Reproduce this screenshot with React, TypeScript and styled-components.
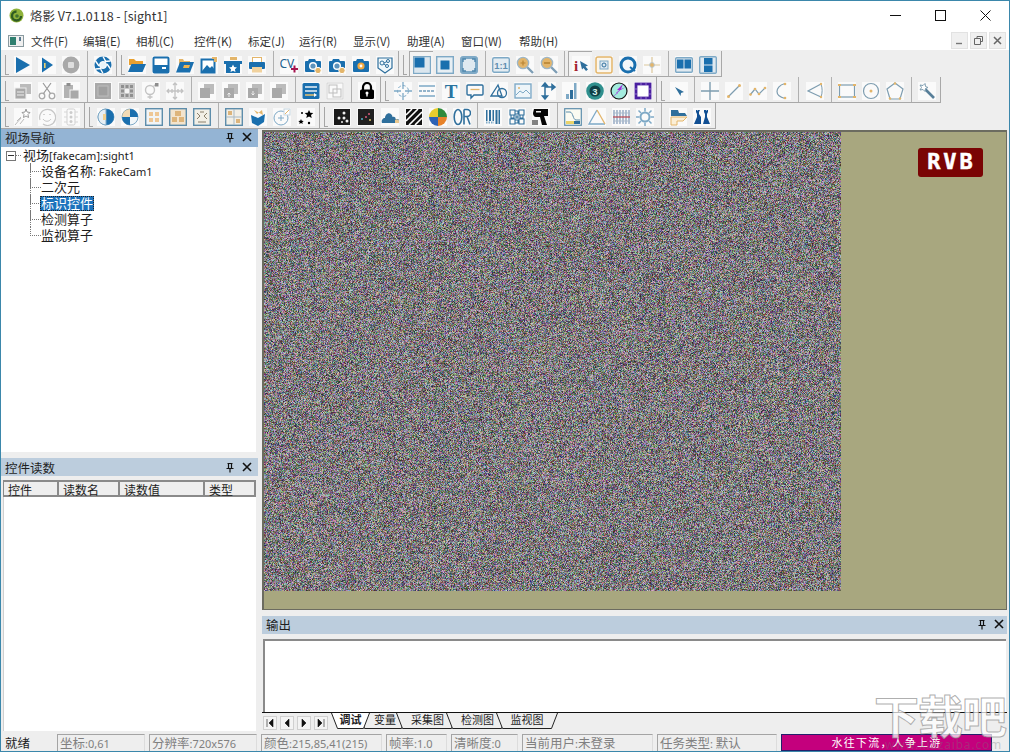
import React, { useEffect, useRef } from "react";
import styled, { createGlobalStyle } from "styled-components";

const B = "#1a6fae";
const L = "#7ea9c6";
const T = "#e3b56a";
const G = "#a9a9a9";
const D = "#2f6f9c";

const Global = createGlobalStyle`
  html, body { margin: 0; padding: 0; background: #eeeeee; }
  body { font-family: "Noto Sans CJK SC", "Noto Sans", sans-serif; color: #1c1c1c; }
  * { box-sizing: border-box; }
`;

const Win = styled.div`
  position: relative; width: 1010px; height: 752px; display: flex; flex-direction: column;
  border: 1px solid #3b87ab; background: #eeeeee; overflow: hidden;
`;
const TitleBar = styled.div`
  height: 30px; background: #fff; display: flex; align-items: center; padding: 0 1px 2px 8px; flex: none;
`;
const TitleText = styled.span`
  margin-left: 6px; font-size: 12.5px; color: #333; flex: 1;
`;
const WinBtn = styled.div`
  width: 45px; height: 28px; display: flex; align-items: center; justify-content: center;
`;
const MenuBar = styled.div`
  height: 19px; background: #fff; display: flex; align-items: center; padding-left: 7px; flex: none;
`;
const MenuItem = styled.span<{ $w: number }>`
  width: ${(p) => p.$w}px; font-size: 11.5px; color: #333; flex: none; white-space: nowrap;
`;
const MdiBtns = styled.div`
  margin-left: auto; display: flex; gap: 2px; padding-right: 3px;
`;
const MdiBtn = styled.div`
  width: 17px; height: 17px; background: #f0f0f0; border: 1px solid #e2e2e2; display: flex; align-items: center; justify-content: center;
`;
const Bands = styled.div`
  height: 79px; flex: none; display: flex; flex-direction: column; padding-top: 1px; background: #eeeeee;
`;
const Row = styled.div`
  height: 26px; display: flex; flex: none;
`;
const Toolbar = styled.div`
  display: flex; align-items: center; height: 26px; padding-right: 1px; border-right: 1px solid #a8a8a8; border-bottom: 1px solid #a8a8a8; flex: none; background: #eeeeee;
`;
const Grip = styled.div<{ $w: number }>`
  width: ${(p) => p.$w}px; height: 25px; padding: 4px 0 2px 4px; flex: none;
  &::before { content: ""; display: block; width: 3px; height: 100%; border-left: 1px solid #a5a5a5; border-bottom: 1px solid #a5a5a5; }
`;
const Sep = styled.div<{ $w: number }>`
  width: ${(p) => p.$w}px; height: 25px; flex: none; display: flex; justify-content: center;
  &::before { content: ""; width: 1px; height: 100%; background: #b0b0b0; }
`;
const Btn = styled.div<{ $on?: boolean }>`
  width: 24px; height: 25px; flex: none; display: flex; align-items: center; justify-content: center; padding-top: 2px;
  ${(p) => (p.$on ? "border-top: 1px solid #a8a8a8; border-left: 1px solid #a8a8a8; background: #f3f3f3;" : "")}
`;
const Cell = styled.div`
  width: 18px; height: 18px; background: #fafafa; display: flex;
  svg { display: block; }
`;
const Main = styled.div`
  flex: 1; display: flex; min-height: 0;
`;
const LeftDock = styled.div`
  width: 257px; flex: none; display: flex; flex-direction: column; margin-right: 4px;
`;
const DockHeader = styled.div<{ $active?: boolean; $pad: number; $low?: boolean }>`
  height: 18px; flex: none; display: flex; align-items: center; padding: 0 ${(p) => p.$pad}px ${(p) => (p.$low ? 0 : 2)}px 4px;
  background: ${(p) => (p.$active ? "#94b4d4" : "#bccddd")}; font-size: 12.5px; color: #1f1f1f;
  span { flex: 1; }
`;
const HeadIcons = styled.div`
  display: flex; gap: 7px; align-items: center;
`;
const TreePane = styled.div`
  height: 305px; flex: none; background: #fff; padding: 0 0 0 5px; margin-right: 2px; font-size: 13px; line-height: 16px;
`;
const TreeRoot = styled.div`
  display: flex; align-items: center; height: 17px;
`;
const Expander = styled.div`
  width: 10px; height: 10px; border: 1px solid #777; display: flex; align-items: center; justify-content: center; flex: none;
  &::before { content: ""; width: 6px; height: 1px; background: #333; }
`;
const Dash = styled.div`
  width: 5px; border-top: 1px dotted #777; margin: 0 1px 0 0; flex: none;
`;
const TreeKids = styled.div`
  padding-left: 24px; margin-top: -1px;
`;
const TreeRow = styled.div`
  display: flex; align-items: center; height: 16px; white-space: nowrap;
`;
const Connector = styled.div<{ $last?: boolean }>`
  width: 10px; height: 16px; flex: none; display: flex; flex-direction: column;
  border-left: 1px dotted ${(p) => (p.$last ? "transparent" : "#777")};
  &::before { content: ""; display: block; height: 8px; width: 10px; margin-left: -1px; border-left: 1px dotted #777; border-bottom: 1px dotted #777; }
`;
const TreeLabel = styled.span<{ $sel?: boolean }>`
  height: 15px; line-height: 14px; padding: 0 1px; flex: none;
  ${(p) => (p.$sel ? "background: #1c73bd; color: #fff; outline: 1px dotted #222; outline-offset: -1px;" : "")}
`;
const Latin = styled.span`
  font-family: "Noto Sans", sans-serif; font-size: 11px;
`;
const TablePanel = styled.div`
  flex: 1; display: flex; flex-direction: column; margin-top: 6px; min-height: 0;
`;
const TableWrap = styled.div`
  flex: 1; margin: 4px 2px 0 2px; background: #fff; border-left: 1px solid #d0d0d0;
`;
const ColHeads = styled.div`
  display: flex; height: 17px; margin-left: -1px; background: #eee; border-top: 2px solid #8a8a8a; border-bottom: 2px solid #8a8a8a; border-left: 1px solid #8a8a8a; border-right: 2px solid #8a8a8a; width: 253px;
`;
const ColHead = styled.div<{ $w: number }>`
  width: ${(p) => p.$w}px; flex: none; border-right: 2px solid #8a8a8a; font-size: 12px; line-height: 15px; height: 13px; padding-left: 4px; white-space: nowrap; overflow: visible;
  &:last-child { border-right: none; }
`;
const RightCol = styled.div`
  flex: 1; display: flex; flex-direction: column; min-width: 0; padding-right: 2px;
`;
const View = styled.div`
  position: relative; height: 480px; flex: none; margin-top: 1px; background: #a8a77f; border: 2px solid #6c6c60; border-bottom-width: 1px; border-right-width: 1px;
`;
const Noise = styled.canvas`
  display: block; width: 577px; height: 459px; filter: blur(0.55px);
`;
const Badge = styled.div`
  position: absolute; left: 654px; top: 16px; width: 65px; height: 29px; border-radius: 3px; background: #7a0404;
  color: #fff; font-family: "DejaVu Sans Mono", monospace; font-weight: 700; font-size: 22px; line-height: 28px; text-align: center; letter-spacing: 3px; -webkit-text-stroke: 0.5px #fff; padding-left: 2px;
`;
const OutPanel = styled.div`
  flex: 1; display: flex; flex-direction: column; margin-top: 6px;
`;
const OutBox = styled.div`
  height: 73px; flex: none; margin: 5px 1px 0 1px; background: #fff; border-top: 2px solid #8a8a8a; border-left: 2px solid #8a8a8a;
`;
const TabStrip = styled.div`
  flex: 1; border-top: 1px solid #111; display: flex; align-items: flex-start; padding-left: 1px;
`;
const NavBtn = styled.div`
  width: 14px; height: 14px; margin: 3px 3px 0 0; border: 1px solid #d0d0d0; background: #f4f4f4; display: flex; align-items: center; justify-content: center; flex: none;
`;
const Tabs = styled.div`
  display: flex;
`;
const Tab = styled.div<{ $w: number; $active?: boolean; $shift?: number }>`
  position: relative; width: ${(p) => p.$w}px; height: 17px; margin-left: -12px; flex: none; text-align: center; padding-left: ${(p) => p.$shift ?? 0}px;
  font-size: 11px; line-height: 13px; color: #222; font-weight: ${(p) => (p.$active ? 700 : 400)}; z-index: ${(p) => (p.$active ? 2 : 1)};
  &:first-child { margin-left: 0; }
  svg { position: absolute; left: 0; top: 0; z-index: -1; }
`;
const Status = styled.div`
  height: 20px; flex: none; display: flex; align-items: flex-end; padding-left: 4px; background: #eee;
`;
const Ready = styled.div`
  width: 52px; height: 17px; font-size: 12.5px; line-height: 18px; flex: none;
`;
const Pane = styled.div<{ $w: number }>`
  width: ${(p) => p.$w}px; height: 17px; flex: none; margin-right: 4px; border: 1px solid #a4a4a4; border-bottom: none; border-right-color: #dcdcdc;
  color: #808080; font-size: 12.5px; line-height: 15px; padding-left: 2px; white-space: nowrap; overflow: hidden;
`;
const Slogan = styled.div`
  width: 211px; height: 17px; flex: none; background: #c4007d; color: #fff; border: 1px solid #24206a; font-size: 11px; letter-spacing: 1.2px; line-height: 15px; text-align: center;
`;
const Watermark = styled.div`
  position: absolute; left: 873px; top: 688px; pointer-events: none; font-size: 45px; line-height: 52px; font-weight: 700; letter-spacing: -1px; white-space: nowrap;
  color: rgba(255,255,255,0.72); -webkit-text-stroke: 1px rgba(140,140,140,0.7);
`;
const WatermarkUrl = styled.div`
  position: absolute; left: 884px; top: 735px; pointer-events: none; font-family: "Noto Sans", sans-serif; font-size: 12px; letter-spacing: 0.8px; color: rgba(120,120,120,0.35);
`;

const S = (c: React.ReactNode) => (
  <svg width="18" height="18" viewBox="0 0 18 18" fill="none">{c}</svg>
);
const overlapGray = (extra?: React.ReactNode) => (
  <>
    <rect x="6" y="2" width="10" height="10" fill="#bbb" />
    <rect x="2" y="6" width="10" height="10" fill={G} />
    {extra}
  </>
);
const zoom = (sign: React.ReactNode) => (
  <>
    <path d="M11 11l6 6" stroke="#7d9db5" strokeWidth="2.4" />
    <circle cx="7" cy="7" r="5.6" fill={T} stroke="#9fb6c6" strokeWidth="1.4" />
    {sign}
  </>
);
const camera = (inner: string, badge?: boolean) => (
  <>
    <path d="M5 3h6l1 2h4a1 1 0 011 1v9a1 1 0 01-1 1H2a1 1 0 01-1-1V6a1 1 0 011-1h2z" fill={B} />
    <circle cx="9" cy="10" r="4" fill="#fff" />
    <circle cx="9" cy="10" r="2.6" fill={inner} />
    {badge && <circle cx="14" cy="14.5" r="3.2" fill={T} stroke="#fff" />}
  </>
);
const icons: Record<string, React.ReactNode> = {
  play: <path d="M2 1l14 8-14 8z" fill={B} />,
  step: (<><path d="M4 1.5l11 7.5-11 7.5z" fill={B} /><rect x="6" y="7" width="1.6" height="5" fill="#e8d070" /></>),
  stop: (<><circle cx="9" cy="9" r="8.4" fill={G} /><rect x="6" y="6" width="6" height="6" rx="1" fill="#dedede" /></>),
  aperture: (<><circle cx="9" cy="9" r="8.5" fill={B} /><path d="M9 .5L12 6M16.5 5L10.5 5.5M16.5 13l-3.500-5M9 17.500L6 12M1.500 13l6-.5M1.500 5l3.500 5" stroke="#fff" strokeWidth="1.4" /><circle cx="9" cy="9" r="3.500" fill="#e9f2f8" stroke="#fff" /></>),
  open: (<><path d="M1 3h5l2 2h7v4H1z" fill="#e8a030" /><path d="M3.500 8H18l-3.500 8H0z" fill={B} /></>),
  save: (<><rect x="1.500" y="1.500" width="15" height="15" rx="1" stroke={B} strokeWidth="2" fill="#fff" /><rect x="1.500" y="9" width="15" height="8" fill={B} /><rect x="10" y="11" width="4" height="2" fill="#fff" /></>),
  openImg: (<><path d="M3 3h4l1 2h6v4H3z" fill={T} /><path d="M4 6h14l-4 10.500H0z" fill={B} /><path d="M8 9h6l-1 3H7z" fill="#eeb450" /></>),
  saveImg: (<><rect x="1.500" y="3.500" width="13" height="13" stroke={B} strokeWidth="2" fill="#fff" /><path d="M2 15l5-6 3 3 2-2 3 4v2H2z" fill={B} /><path d="M12 1h5v5h-3V3h-2z" fill={T} /></>),
  starBox: (<><path d="M6 1h7v3H6z" fill={T} /><path d="M0 5h18v3H0z" fill={B} /><path d="M2 8h14v9H2z" fill={B} /><path d="M9 8.500l1.200 2.600 2.800.3-2.100 1.900.6 2.700L9 14.700l-2.500 1.300.6-2.700L5 11.400l2.800-.3z" fill="#fff" /></>),
  print: (<><rect x="4.500" y="1.500" width="9" height="5" stroke={T} fill="#fff" /><rect x="1" y="6" width="16" height="7" rx="1" fill={B} /><rect x="4" y="11" width="10" height="5.500" fill="#f1d29e" /></>),
  cv: (<><text x="-0.500" y="12" fontSize="12" fontFamily="Noto Sans" fill="#22628f">CV</text><path d="M11 13h7M14.500 9.500v7" stroke="#a5154f" strokeWidth="2" /></>),
  camAdd: camera("#5d93bc", true),
  camAdd2: camera("#5d93bc", true),
  camOrange: (<><path d="M5 3h6l1 2h4a1 1 0 011 1v9a1 1 0 01-1 1H2a1 1 0 01-1-1V6a1 1 0 011-1h2z" fill={B} /><circle cx="9" cy="10" r="3.600" fill="#f3a93f" /><circle cx="9" cy="10" r="1.400" fill="#fff" /></>),
  share: (<><path d="M2 2h14v10l-7 5-7-5z" stroke={D} strokeWidth="1.2" fill="#f1f8fb" /><circle cx="6" cy="7" r="2" stroke={D} /><circle cx="12" cy="5" r="1.500" stroke={D} /><circle cx="11" cy="10" r="1.500" stroke={D} /><path d="M8 7l3-1.500M8 8l2 1.500" stroke={D} /></>),
  l1: (<><rect x=".5" y=".5" width="17" height="17" fill="#dbe6ee" stroke={L} strokeWidth="1.400" /><rect x="1.500" y="1.500" width="10" height="10" fill={B} /></>),
  l2: (<><rect x=".7" y=".7" width="16.600" height="16.600" fill="#e7eff4" stroke={L} strokeWidth="1.400" /><rect x="4.500" y="4.500" width="9" height="9" fill={B} /></>),
  l3: (<><rect x="0" y="0" width="18" height="18" rx="3" fill={L} /><rect x="3" y="3" width="12" height="12" fill="#dfe9f0" /><path d="M3 6V3h3M12 3h3v3M15 12v3h-3M6 15H3v-3" stroke="#4e86ad" strokeWidth="1.400" /></>),
  one: (<><rect x=".7" y="1.700" width="16.600" height="14.600" rx="1.500" fill="#e3ecf2" stroke={L} strokeWidth="1.400" /><text x="9" y="12.500" textAnchor="middle" fontSize="9.500" fontWeight="700" fontFamily="Liberation Sans" fill="#5f8fb0">1:1</text></>),
  zoomIn: zoom(<path d="M4.500 7h5M7 4.500v5" stroke="#b88434" strokeWidth="1.200" />),
  zoomOut: zoom(<path d="M4 7h6" stroke="#b88434" strokeWidth="1.600" />),
  iArrow: (<><text x="2" y="15" fontSize="15" fontWeight="700" fontFamily="Liberation Serif" fill="#a4232e">i</text><path d="M8 5l8 4.500-2.500 1 2.500 3-2 1.500-2.500-3L10 13.500z" fill={D} /></>),
  rectCam: (<><rect x="1" y="1" width="16" height="16" rx="2" fill="#fbf6ec" stroke={T} strokeWidth="1.500" /><rect x="5" y="5" width="8" height="8" stroke={L} fill="#dce8f0" /><circle cx="9" cy="9" r="2" stroke={D} /></>),
  q: (<><circle cx="9" cy="9" r="7" fill="#f2f7fa" stroke={B} strokeWidth="3" /><path d="M11 11l5 4" stroke={B} strokeWidth="2" /></>),
  cross: (<><path d="M9 1v16M1 9h16" stroke="#dcc79b" strokeWidth="1.200" /><circle cx="9" cy="9" r="2.400" fill={T} stroke="#b8c8d2" /></>),
  split1: (<><rect x=".7" y="1.700" width="16.600" height="14.600" rx="1" fill="#dfe9f0" stroke={L} strokeWidth="1.400" /><rect x="2" y="3.500" width="6.500" height="9" fill={B} /><rect x="9.500" y="3.500" width="6.500" height="9" fill={B} /></>),
  split2: (<><rect x=".7" y=".7" width="16.600" height="16.600" rx="1" fill="#dfe9f0" stroke={L} strokeWidth="1.400" /><rect x="5" y="2" width="8.500" height="6.500" fill={B} /><rect x="5" y="9.500" width="8.500" height="6.500" fill={B} /></>),
  copy: (<><rect x="6" y="2" width="11" height="10" fill="#bbb" /><rect x="1" y="6" width="11" height="11" fill={G} stroke="#eee" /><path d="M3 10h7M3 13h7" stroke="#eee" /></>),
  cut: (<><circle cx="4" cy="14" r="2.800" stroke={G} strokeWidth="1.300" /><circle cx="14" cy="14" r="2.800" stroke={G} strokeWidth="1.300" /><path d="M5.500 11.500L13 1M12.500 11.500L5 1" stroke="#999" strokeWidth="1.200" /></>),
  paste: (<><path d="M2 3h9v13H2z" fill="#b3b3b3" /><rect x="4.500" y="1" width="4" height="3" fill="#8e8e8e" /><rect x="8" y="8" width="9" height="9" fill={G} stroke="#f2f2f2" /></>),
  graySquare: (<><rect x="1" y="1" width="16" height="16" fill={G} /><rect x="4" y="4" width="10" height="10" fill="#a0a0a0" stroke="#bdbdbd" /></>),
  grayDots: (<><rect x="1" y="1" width="16" height="16" fill="#c8c8c8" /><path d="M3 3h3v3H3zM7.500 3h3v3h-3zM12 3h3v3h-3zM3 7.500h3v3H3zM12 7.500h3v3h-3zM3 12h3v3H3zM7.500 12h3v3h-3zM12 12h3v3h-3z" fill="#8f8f8f" /><rect x="7" y="7" width="4" height="4" fill="#f4f4f4" /></>),
  person: (<><circle cx="8" cy="8" r="4.500" stroke="#c4c4c4" strokeWidth="1.400" /><path d="M8 12.500V17M5.500 15h5M11.500 4.500l3-3" stroke="#c4c4c4" strokeWidth="1.300" /><rect x="13" y="1" width="3.500" height="3.500" fill="#8e8e8e" /></>),
  move: <path d="M9 1v16M1 9h16M7 3l2-2 2 2M7 15l2 2 2-2M3 7L1 9l2 2M15 7l2 2-2 2M6 7v4M12 7v4" stroke="#c2c2c2" strokeWidth="1.300" />,
  gs1: overlapGray(),
  gs2: overlapGray(<path d="M7 15v-4M5.500 12.500L7 11l1.500 1.500" stroke="#eee" />),
  gs3: overlapGray(<path d="M7 9v4M5.500 11.500L7 13l1.500-1.500" stroke="#eee" />),
  gs4: overlapGray(),
  listBlue: (<><rect x=".5" y="1" width="17" height="16" rx="1.500" fill={B} /><path d="M3 5h12M3 9h12" stroke="#eaf2f7" strokeWidth="1.500" /><path d="M3 13h9" stroke="#e7c16f" strokeWidth="1.500" /><path d="M12 11l3 2-3 2z" fill="#fff" /></>),
  grayCopy: (<><rect x="1" y="1" width="16" height="16" stroke="#d0d0d0" /><rect x="3" y="3" width="8" height="8" stroke="#bdbdbd" /><rect x="7" y="7" width="8" height="8" stroke="#bdbdbd" /></>),
  lock: (<><path d="M5 8V5a4 4 0 018 0v3" stroke="#000" strokeWidth="2.200" /><rect x="2" y="7.500" width="14" height="9.500" rx="1.500" fill="#000" /><circle cx="9" cy="11" r="1.500" fill="#fff" /><rect x="8.300" y="11" width="1.400" height="3.500" fill="#fff" /></>),
  crossDash: (<><circle cx="9" cy="9" r="5.500" stroke={L} strokeDasharray="3 2" /><path d="M9 0v7M9 11v7M0 9h7M11 9h7" stroke={L} strokeWidth="1.300" /></>),
  lines: (<><path d="M1 4h16M1 14h16" stroke={L} strokeWidth="1.600" /><path d="M1 9h16" stroke={D} strokeWidth="1.200" strokeDasharray="3 1" /></>),
  T: <text x="9" y="16" textAnchor="middle" fontSize="19" fontWeight="700" fontFamily="Liberation Serif" fill="#2b749f">T</text>,
  bubble: (<><path d="M2 3h14a1 1 0 011 1v8a1 1 0 01-1 1H8l-3 3v-3H2a1 1 0 01-1-1V4a1 1 0 011-1z" stroke={D} strokeWidth="1.400" /><path d="M4.500 7.500h9" stroke={T} strokeWidth="1.300" /></>),
  shapes: (<><path d="M8 3L1 14h11z" stroke={D} strokeWidth="1.300" /><circle cx="12" cy="11" r="4.500" stroke={D} strokeWidth="1.300" /></>),
  image: (<><rect x="1" y="2" width="16" height="14" stroke={L} strokeWidth="1.400" fill="#eef5f9" /><path d="M2 13l4-4 3 2 3-3 4 4" stroke={L} /><circle cx="5" cy="6" r="1" fill={T} /></>),
  axes: <path d="M7 1l-2.500 3h5zM7 17l-2.500-3h5zM17 5l-3-2.500v5zM7 3v12M7 5h8" stroke={D} fill={D} strokeWidth="1.500" />,
  bars: (<><rect x="4" y="12" width="3" height="5" fill={L} /><rect x="8" y="8" width="3" height="9" fill={D} /><rect x="12" y="1" width="2.500" height="16" fill={L} /></>),
  circle3: (<><circle cx="9" cy="9" r="8.800" fill="#2f8f8d" /><circle cx="9" cy="9" r="5.500" fill="#0f3f45" /><text x="9" y="12.500" textAnchor="middle" fontSize="9.500" fontWeight="700" fontFamily="Liberation Sans" fill="#d7f2ee">3</text></>),
  bolt: (<><circle cx="9" cy="9" r="8" fill="#a4ecde" stroke="#111" strokeWidth="1.200" /><path d="M13 2L7 8l3 .5L0 17l8-6-2-.5L16 5l-5 2z" fill="#a225d6" /></>),
  purpleSq: (<><rect x="2" y="2" width="14" height="14" stroke="#4a1fa0" strokeWidth="2.800" fill="#fff" /><path d="M2 6v2M2 11v2M16 6v2M16 11v2M6 2h2M11 2h2M6 16h2M11 16h2" stroke="#8f72c9" /></>),
  arrow: <path d="M5 5l9 5-3 1-.5 3z" fill={D} />,
  plus: (<><path d="M9 0v18M0 9h18" stroke="#7e9db0" strokeWidth="1.400" /></>),
  line: (<><path d="M3 15L15 3" stroke="#7e9db0" strokeWidth="1.200" /><circle cx="3.500" cy="14.500" r="1.500" fill={T} /><circle cx="14.500" cy="3.500" r="1.500" fill={T} /></>),
  poly: (<><path d="M1 13l5-6 4 5 6-6" stroke="#7e9db0" strokeWidth="1.200" /><circle cx="1.500" cy="12.500" r="1.300" fill={T} /><circle cx="6" cy="7" r="1.300" fill={T} /><circle cx="10" cy="12" r="1.300" fill={T} /><circle cx="16" cy="6" r="1.300" fill={T} /></>),
  arc: (<><path d="M12 1.500C6 3 4 7 4 9.500s2 5.500 8 7" stroke="#7e9db0" strokeWidth="1.200" /><circle cx="12" cy="2" r="1.300" fill={T} /><circle cx="12" cy="16" r="1.300" fill={T} /></>),
  angle: (<><path d="M15 2L2 9l13 6" stroke="#7e9db0" strokeWidth="1.200" /><path d="M15 2c1.500 4 1.500 9 0 13" stroke="#7e9db0" /><circle cx="15" cy="2" r="1.200" fill={T} /><circle cx="15" cy="15" r="1.200" fill={T} /></>),
  rect: (<><rect x="1.500" y="3" width="15" height="12" stroke="#7e9db0" strokeWidth="1.200" /><path d="M0 2h3v2H0zM15 2h3v2h-3zM0 14h3v2H0zM15 14h3v2h-3z" fill={T} /></>),
  circle: (<><circle cx="9" cy="9" r="7.500" stroke="#7e9db0" strokeWidth="1.200" /><circle cx="9" cy="9" r="1.500" fill={T} /></>),
  penta: (<><path d="M9 1l8 6-3 10H4L1 7z" stroke="#7e9db0" strokeWidth="1.200" /><circle cx="9" cy="1.500" r="1.200" fill={T} /><circle cx="4" cy="16.500" r="1.200" fill={T} /><circle cx="14" cy="16.500" r="1.200" fill={T} /></>),
  wand: (<><path d="M6 6l10 10" stroke="#587f99" strokeWidth="2.600" /><path d="M2 3l3 .5 2-2 .5 3 2.500 1-2.500 1-.5 3-2-2-3 .5 1.500-2.500z" stroke="#7e9db0" fill="#fff" /></>),
  meteor: (<><path d="M12 1l1 3 3 .5-2 2 .5 3-2.500-1.500L9.500 9.500l.5-3-2-2 3-.5z" stroke="#9a9a9a" fill="#fff" /><path d="M1 17l6-7M3 13l4-4M6 16l4-5" stroke="#bbb" /></>),
  smile: (<><path d="M2 12a8 8 0 1 1 3 4" stroke="#c6c6c6" strokeWidth="1.200" /><path d="M5 11c2 3 6 3 8 0" stroke="#c6c6c6" /><path d="M6 6v1M12 6v1" stroke="#c6c6c6" strokeWidth="1.500" /></>),
  traffic: (<><rect x="5" y="1" width="8" height="16" rx="1.500" stroke="#cfcfcf" /><circle cx="9" cy="4.500" r="1.500" fill="#ccc" /><circle cx="9" cy="9" r="1.500" fill="#ccc" /><circle cx="9" cy="13.500" r="1.500" fill="#ccc" /><path d="M2 4h3M2 9h3M2 14h3M13 4h3M13 9h3M13 14h3" stroke="#d6d6d6" /></>),
  half: (<><circle cx="9" cy="9" r="8" fill="#fff" stroke={L} /><path d="M9 1a8 8 0 010 16z" fill={B} /><path d="M9 1a8 8 0 000 16z" fill="#e7eff4" stroke={L} /><path d="M6 6h3v6H6z" fill="#f0d090" /></>),
  pie4: (<><circle cx="9" cy="9" r="8" fill="#f2f6f8" stroke={L} /><path d="M9 1a8 8 0 018 8H9zM9 9v8a8 8 0 01-8-8z" fill={B} /><path d="M9 9H1a8 8 0 018-8z" fill="#f2c98a" opacity=".6" /></>),
  g1: (<><rect x=".7" y=".7" width="16.600" height="16.600" fill="#f1f4f6" stroke="#5d8dab" strokeWidth="1.400" /><path d="M4 4h4v4H4zM10 4h4v4h-4zM4 10h4v4H4zM10 10h4v4h-4z" fill="#eec795" /></>),
  g2: (<><rect x=".7" y=".7" width="16.600" height="16.600" fill="#f3e4cd" stroke="#5d8dab" strokeWidth="1.400" /><path d="M6 3h6v5H6zM3 9h5v5H3zM10 9h5v5h-5z" fill="#deb57b" /></>),
  g3: (<><rect x=".7" y=".7" width="16.600" height="16.600" fill="#f2efe6" stroke="#5d8dab" strokeWidth="1.400" /><path d="M4 5l3 3-3 3M14 5l-3 3 3 3M5 14h8M7 4h4" stroke="#8a7f6a" /></>),
  g4: (<><rect x=".7" y=".7" width="16.600" height="16.600" fill="#f2efe6" stroke="#5d8dab" strokeWidth="1.400" /><path d="M9 1v16M1 9h16" stroke="#a9b9c4" /><path d="M3 3h4v4H3zM11 11h4v4h-4z" fill="#dcb47b" /></>),
  folderCheck: (<><path d="M5 2l3 4 5-4 1 5z" fill={T} /><path d="M2 7l7 3 7-4-1 8-6 4-6-3z" fill={B} /></>),
  circlePlus: (<><circle cx="8" cy="10" r="7" stroke={L} /><path d="M5 10h6M8 7v6" stroke={L} /><rect x="11" y="1" width="6" height="6" stroke="#c5d5df" fill="#fff" /><path d="M12 6l4-4" stroke={T} /></>),
  stars: (<><path d="M12 2l1.300 2.800 3 .3-2.300 2 .7 3-2.700-1.600L9.300 10l.7-3-2.300-2 3-.3z" fill="#000" /><circle cx="5" cy="5" r="1" fill="#000" /><path d="M4 11l.8 1.700 1.900.2-1.400 1.300.4 1.800-1.700-1-1.700 1 .4-1.800-1.400-1.300 1.900-.2z" fill="#000" /><circle cx="12" cy="15" r="1.200" fill="#000" /></>),
  dots1: (<><rect x="1" y="1" width="16" height="16" fill="#1b1b1b" /><circle cx="11" cy="5" r="1.500" fill="#eee" /><circle cx="6" cy="10" r="1.500" fill="#eee" /><circle cx="11" cy="10" r="1.500" fill="#eee" /><circle cx="14" cy="13" r="1.500" fill="#eee" /><circle cx="9" cy="14" r="1" fill="#eee" /></>),
  dots2: (<><rect x="1" y="1" width="16" height="16" fill="#202020" /><circle cx="12" cy="6" r="1" fill="#d85a7a" /><circle cx="5" cy="11" r="1" fill="#59b0c9" /><circle cx="9" cy="9" r="1" fill="#d85a7a" /><circle cx="13" cy="12" r="1" fill="#d8c06a" /></>),
  cloud: (<><path d="M1 15c-1-3 1-5 3-5 0-3 3-6 6-4 1 1 1.500 2 1.500 3 2-1 3.500 1 3 2h3v4z" fill={D} /><path d="M14 12c1-1 3-1 4 1v2h-4z" fill="#e9c88f" /></>),
  stripes: (<><rect x="1" y="1" width="16" height="16" fill="#111" /><path d="M1 7l6-6M1 13L13 1M4 17L17 4M10 17l7-7" stroke="#fff" strokeWidth="1.600" /></>),
  wheel: (<><path d="M9 9V0a9 9 0 019 9z" fill="#2f8a3c" /><path d="M9 9h9a9 9 0 01-9 9z" fill="#e7822a" /><path d="M9 9v9a9 9 0 01-9-9z" fill="#2d62b5" /><path d="M9 9H0a9 9 0 019-9z" fill="#e8cc2d" /></>),
  ocr: (<><ellipse cx="5" cy="9" rx="3.800" ry="7.500" stroke={D} strokeWidth="1.600" /><path d="M11 1.500v15M11 1.500h3a3.500 3.500 0 010 7h-3M14 8.500l3 8" stroke={D} strokeWidth="1.600" /></>),
  barcode: (<><path d="M2 2h1.500v11H2zM5 2h2v11H5zM8.500 2H10v11H8.500zM11.500 2h2v14h-2zM14.500 2H16v14h-1.500z" fill={D} /><path d="M2 14.500h8" stroke={L} strokeWidth="2" strokeDasharray="1.500 1" /></>),
  qr: <path d="M2 2h5v5H2zM11 2h5v5h-5zM2 11h5v5H2zM8 8h2v2H8zM11 11h5v5h-5zM7 3h3v3H7zM3 7h3v3H3zM12 7h3v3h-3zM7 12h3v3H7z" fill="none" stroke={D} strokeWidth="1.100" />,
  scanner: (<><path d="M2 1h14v7h-4l3 9h-5l-2-8H4C2 9 1 7 1 5z" fill="#050505" /><rect x="4" y="3" width="5" height="1.500" fill="#eee" /><path d="M1 12v5M3 12v5M5 12v5" stroke="#333" strokeWidth="1.200" /></>),
  curve: (<><rect x=".7" y=".7" width="16.600" height="16.600" fill="#fbfbf2" stroke="#5d8dab" strokeWidth="1.200" /><path d="M2 4h4c3 0 3 8 6 8h4" stroke="#5d8dab" /><rect x="2" y="13" width="8" height="3" fill="#ead36a" /><rect x="10" y="13" width="6" height="3" fill={D} /></>),
  triangle: (<><path d="M9 2L1 16h16" stroke={L} strokeWidth="1.300" /><path d="M9 2l8 14" stroke={T} strokeWidth="1.300" /></>),
  gridH: (<><path d="M2 2v14M5 2v14M8 2v14M11 2v14M14 2v14M17 2v14" stroke="#8aa0bd" strokeWidth="1.300" /><path d="M1 5h17M1 13h17" stroke="#a9bacb" /><path d="M1 9h17" stroke="#b8505a" strokeWidth="1.300" /></>),
  sun: (<><circle cx="9" cy="9" r="4.500" stroke={L} strokeWidth="2" /><path d="M9 0v3.500M9 14.500V18M0 9h3.500M14.500 9H18M2.500 2.500L5 5M13 13l2.500 2.500M15.500 2.500L13 5M5 13l-2.500 2.500" stroke={L} strokeWidth="1.500" /></>),
  tray: (<><path d="M2 2h7l1 3h6l2 3H2z" fill={D} /><path d="M2 9h16l-4 4H8v4H2z" fill="#fbefd7" stroke={T} /></>),
  flasks: (<><path d="M3 2v2l1 2v3L1 16h7V9L6 6V4l1-2H5l-.5 1L4 2zM11 2v2l1 2v3l-2 7h7l-3-7V6l1-2V2h-1l-.5 1-.5-1z" fill="#114f93" /></>),
};

type Item = string | number;
type Bar = { grip: number; items: Item[] };
const rows: Bar[][] = [
  [
    { grip: 10, items: ["play", "step", "stop", 8, "aperture"] },
    { grip: 8, items: ["open", "save", "openImg", "saveImg", "starBox", "print", 8, "cv", "camAdd", "camAdd2", "camOrange", "share"] },
    { grip: 10, items: ["l1", "l2", "l3", 8, "one", "zoomIn", "zoomOut", 7, "iArrow", "rectCam", "q", "cross", 8, "split1", "split2"] },
  ],
  [
    { grip: 10, items: ["copy", "cut", "paste", 8, "graySquare", "grayDots", "person", "move", 8, "gs1", "gs2", "gs3", "gs4", 8, "listBlue", "grayCopy", 8, "lock"] },
    { grip: 10, items: ["crossDash", "lines", "T", "bubble", "shapes", "image", "axes", "bars", "circle3", "bolt", "purpleSq"] },
    { grip: 10, items: ["arrow", 7, "plus", "line", "poly", "arc", 9, "angle", 8, "rect", "circle", "penta", 8, "wand"] },
  ],
  [
    { grip: 10, items: ["meteor", "smile", "traffic"] },
    { grip: 9, items: ["half", "pie4", "g1", "g2", "g3", 8, "g4", "folderCheck", "circlePlus", "stars"] },
    { grip: 10, items: ["dots1", "dots2", "cloud", "stripes", "wheel", "ocr", 7, "barcode", "qr", "scanner", 8, "curve", "triangle", "gridH", "sun", 9, "tray", "flasks"] },
  ],
];
const activeIcons = new Set(["l1", "iArrow"]);

const menus: [string, number][] = [
  ["文件(F)", 52], ["编辑(E)", 53], ["相机(C)", 58], ["控件(K)", 54], ["标定(J)", 51],
  ["运行(R)", 54], ["显示(V)", 54], ["助理(A)", 54], ["窗口(W)", 58], ["帮助(H)", 60],
];

const Pin = () => (
  <svg width="10" height="11" viewBox="0 0 10 11" fill="none"><path d="M2.500 1.500h5M3.500 1.500v5M6.500 1.500v5M1.500 6.500h7M5 6.500V10.500" stroke="#111" strokeWidth="1.200" /></svg>
);
const CloseX = () => (
  <svg width="10" height="10" viewBox="0 0 10 10"><path d="M1 1l8 8M9 1L1 9" stroke="#111" strokeWidth="1.600" /></svg>
);
const HeaderTools = () => (
  <HeadIcons><Pin /><CloseX /></HeadIcons>
);

const TabShape = ({ w, active }: { w: number; active?: boolean }) => (
  <svg width={w} height="17" viewBox={`0 0 ${w} 17`}>
    <path d={`M0.500 0L6.500 15.500H${w - 6.5}L${w - 0.5} 0`} fill={active ? "#fff" : "#eeeeee"} stroke="#222" />
  </svg>
);

const NoiseCanvas = () => {
  const ref = useRef<HTMLCanvasElement>(null);
  useEffect(() => {
    const c = ref.current;
    const ctx = c?.getContext("2d");
    if (!c || !ctx) return;
    const img = ctx.createImageData(c.width, c.height);
    let s = 12345;
    const rnd = () => {
      s = (s * 1664525 + 1013904223) >>> 0;
      return (s >>> 16) / 65536;
    };
    for (let i = 0; i < img.data.length; i += 4) {
      const g = 70 + rnd() * 110;
      img.data[i] = g + (rnd() - 0.5) * 90;
      img.data[i + 1] = g - 4 + (rnd() - 0.5) * 80;
      img.data[i + 2] = g + (rnd() - 0.5) * 90;
      img.data[i + 3] = 255;
    }
    ctx.putImageData(img, 0, 0);
  }, []);
  return <Noise ref={ref} width={577} height={459} />;
};

const Nav = ({ d }: { d: string }) => (
  <NavBtn><svg width="8" height="8" viewBox="0 0 8 8"><path d={d} fill="#111" stroke="#111" strokeWidth=".6" /></svg></NavBtn>
);

const tabs = [
  { t: "调试", w: 39, active: true, shift: 0 },
  { t: "变量", w: 50, shift: 4 },
  { t: "采集图", w: 62, shift: 1 },
  { t: "检测图", w: 62, shift: 1 },
  { t: "监视图", w: 62, shift: 0 },
];

export default function App() {
  return (
    <Win>
      <Global />
      <TitleBar>
        <svg width="15" height="15" viewBox="0 0 15 15">
          <circle cx="7.500" cy="7.500" r="7" fill="#8fb23a" />
          <path d="M12 8a4.500 4.500 0 11-4.500-4.500" fill="none" stroke="#2f5c22" strokeWidth="2.400" />
          <circle cx="8" cy="8" r="1.800" fill="#3f7030" />
        </svg>
        <TitleText>烙影 V7.1.0118 - [sight1]</TitleText>
        <WinBtn><svg width="11" height="11"><path d="M0 5.500h11" stroke="#111" /></svg></WinBtn>
        <WinBtn><svg width="11" height="11"><rect x=".5" y=".5" width="10" height="10" fill="none" stroke="#111" /></svg></WinBtn>
        <WinBtn><svg width="11" height="11"><path d="M.5 .5l10 10M10.500 .5l-10 10" stroke="#111" /></svg></WinBtn>
      </TitleBar>
      <MenuBar>
        <svg width="16" height="12" viewBox="0 0 16 12" style={{ marginRight: 7, flex: "none" }}>
          <rect x=".5" y=".5" width="15" height="11" fill="#f0f0f0" stroke="#8a9aa0" />
          <rect x="2" y="2" width="6" height="8" fill="#2f7f6f" />
          <rect x="11" y="2" width="2" height="4" fill="#5a7a90" />
        </svg>
        {menus.map(([m, w]) => (
          <MenuItem key={m} $w={w}>{m}</MenuItem>
        ))}
        <MdiBtns>
          <MdiBtn><svg width="9" height="9"><path d="M1 7.500h6" stroke="#777" strokeWidth="1.400" /></svg></MdiBtn>
          <MdiBtn><svg width="9" height="9" fill="none"><path d="M3 2.500V.5h5.500v5H6.500M.5 2.500h6v6h-6z" stroke="#666" /></svg></MdiBtn>
          <MdiBtn><svg width="9" height="9"><path d="M1 1l7 7M8 1L1 8" stroke="#666" strokeWidth="1.500" /></svg></MdiBtn>
        </MdiBtns>
      </MenuBar>
      <Bands>
        {rows.map((bars, r) => (
          <Row key={r}>
            {bars.map((bar, b) => (
              <Toolbar key={b}>
                <Grip $w={bar.grip} />
                {bar.items.map((it, i) =>
                  typeof it === "number" ? (
                    <Sep key={i} $w={it} />
                  ) : (
                    <Btn key={i} $on={activeIcons.has(it)}>
                      <Cell>{S(icons[it])}</Cell>
                    </Btn>
                  )
                )}
              </Toolbar>
            ))}
          </Row>
        ))}
      </Bands>
      <Main>
        <LeftDock>
          <DockHeader $active $pad={6}>
            <span>视场导航</span>
            <HeaderTools />
          </DockHeader>
          <TreePane>
            <TreeRoot>
              <Expander />
              <Dash />
              <TreeLabel>视场<Latin>[fakecam]:sight1</Latin></TreeLabel>
            </TreeRoot>
            <TreeKids>
              <TreeRow><Connector /><TreeLabel>设备名称<Latin>: FakeCam1</Latin></TreeLabel></TreeRow>
              <TreeRow><Connector /><TreeLabel>二次元</TreeLabel></TreeRow>
              <TreeRow><Connector /><TreeLabel $sel>标识控件</TreeLabel></TreeRow>
              <TreeRow><Connector /><TreeLabel>检测算子</TreeLabel></TreeRow>
              <TreeRow><Connector $last /><TreeLabel>监视算子</TreeLabel></TreeRow>
            </TreeKids>
          </TreePane>
          <TablePanel>
            <DockHeader $pad={6} $low>
              <span>控件读数</span>
              <HeaderTools />
            </DockHeader>
            <TableWrap>
              <ColHeads>
                <ColHead $w={55}>控件</ColHead>
                <ColHead $w={61}>读数名</ColHead>
                <ColHead $w={85}>读数值</ColHead>
                <ColHead $w={49}>类型</ColHead>
              </ColHeads>
            </TableWrap>
          </TablePanel>
        </LeftDock>
        <RightCol>
          <View>
            <NoiseCanvas />
            <Badge>RVB</Badge>
          </View>
          <OutPanel>
            <DockHeader $pad={3}>
              <span>输出</span>
              <HeaderTools />
            </DockHeader>
            <OutBox />
            <TabStrip>
              <Nav d="M1 0v8M7 0L3 4l4 4z" />
              <Nav d="M6 0L2 4l4 4z" />
              <Nav d="M2 0l4 4-4 4z" />
              <Nav d="M7 0v8M1 0l4 4-4 4z" />
              <Tabs>
                {tabs.map((t) => (
                  <Tab key={t.t} $w={t.w} $active={t.active} $shift={t.shift}>
                    <TabShape w={t.w} active={t.active} />
                    {t.t}
                  </Tab>
                ))}
              </Tabs>
            </TabStrip>
          </OutPanel>
        </RightCol>
      </Main>
      <Status>
        <Ready>就绪</Ready>
        <Pane $w={88}>坐标<Latin>:0,61</Latin></Pane>
        <Pane $w={108}>分辨率<Latin>:720x576</Latin></Pane>
        <Pane $w={121}>颜色<Latin>:215,85,41(215)</Latin></Pane>
        <Pane $w={61}>帧率<Latin>:1.0</Latin></Pane>
        <Pane $w={67}>清晰度<Latin>:0</Latin></Pane>
        <Pane $w={131}>当前用户<Latin>:</Latin>未登录</Pane>
        <Pane $w={120}>任务类型<Latin>: </Latin>默认</Pane>
        <Slogan>水往下流，人争上游</Slogan>
      </Status>
      <Watermark>下载吧</Watermark>
      <WatermarkUrl>www.xiazaiba.com</WatermarkUrl>
    </Win>
  );
}
